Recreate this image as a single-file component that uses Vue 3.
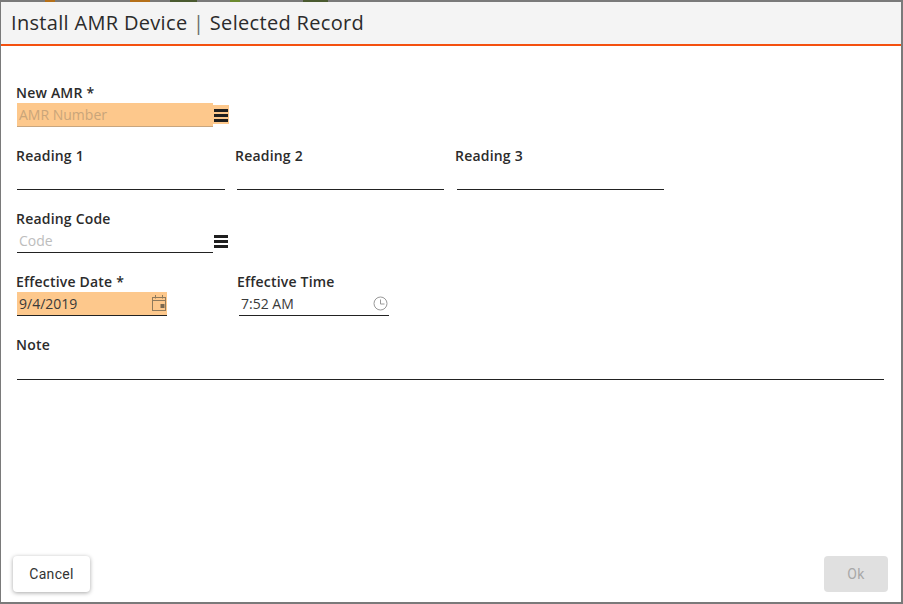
<script setup>
const readings = ['Reading 1', 'Reading 2', 'Reading 3']
</script>

<template>
  <div class="page">
    <div class="dialog">
      <header class="head">Install AMR Device <span class="sep">|</span> Selected Record</header>
      <main class="body">
        <div class="field amr">
          <label class="lbl">New AMR *</label>
          <div class="line">
            <div class="input req w196"><span class="ph ph-req">AMR Number</span></div>
            <span class="menu req-menu"><i></i><i></i><i></i></span>
          </div>
        </div>

        <div class="row readings">
          <div v-for="(r, i) in readings" :key="r" class="field reading" :class="'r' + i">
            <label class="lbl">{{ r }}</label>
            <div class="input tall"></div>
          </div>
        </div>

        <div class="field code">
          <label class="lbl">Reading Code</label>
          <div class="line">
            <div class="input w196"><span class="ph">Code</span></div>
            <span class="menu"><i></i><i></i><i></i></span>
          </div>
        </div>

        <div class="row dates">
          <div class="field date">
            <label class="lbl">Effective Date *</label>
            <div class="input req w150">
              <span class="val">9/4/2019</span>
              <svg class="ico cal" width="14" height="16" viewBox="0 0 14 16" fill="none" stroke="#8f7a5c" stroke-width="1">
                <rect x="0.5" y="2.5" width="13" height="13" />
                <path d="M0.5 5.5h13M3.5 0v3.5M10.5 0v3.5" />
                <rect x="8.5" y="9" width="4" height="4" fill="#7a6850" stroke="none" />
              </svg>
            </div>
          </div>
          <div class="field time">
            <label class="lbl">Effective Time</label>
            <div class="input w150">
              <span class="val">7:52 AM</span>
              <svg class="ico clk" width="15" height="15" viewBox="0 0 15 15" fill="none" stroke="#999" stroke-width="1">
                <circle cx="7.5" cy="7.5" r="6.5" />
                <path d="M7.5 3.5V8H11.5" />
              </svg>
            </div>
          </div>
        </div>

        <div class="field note">
          <label class="lbl">Note</label>
          <div class="input tall full"></div>
        </div>
      </main>
      <footer class="foot">
        <button class="btn cancel">Cancel</button>
        <button class="btn ok" disabled>Ok</button>
      </footer>
    </div>
  </div>
</template>

<style>
html, body { margin: 0; background: #777; }
</style>

<style scoped>
.page {
  width: 903px;
  height: 604px;
  box-sizing: border-box;
  padding: 2px 2px 2px 1px;
  background-color: #7a7a7a;
  background-image: linear-gradient(90deg,
    transparent 45px, #b5701a 45px, #b5701a 55px, transparent 55px,
    transparent 130px, #b5701a 130px, #b5701a 150px, transparent 150px,
    transparent 170px, #4a5a30 170px, #4a5a30 197px, transparent 197px,
    transparent 230px, #6c8a30 230px, #6c8a30 240px, transparent 240px,
    transparent 303px, #4a5a30 303px, #4a5a30 328px, transparent 328px);
  background-size: 100% 2px;
  background-repeat: no-repeat;
  font-family: "Open Sans", sans-serif;
  color: #262626;
  overflow: hidden;
}
.dialog {
  height: 100%;
  background: #fff;
  display: flex;
  flex-direction: column;
}
.head {
  height: 42px;
  line-height: 42px;
  padding-left: 10px;
  background: #f4f4f4;
  border-bottom: 2px solid #f4500f;
  font-size: 20px;
  letter-spacing: 0.32px;
  color: #2b2b2b;
}
.sep { color: #6b6b6b; }
.body {
  flex: 1;
  padding: 37px 0 0 15px;
  display: flex;
  flex-direction: column;
}
.field { display: flex; flex-direction: column; }
.lbl {
  font-size: 14px;
  font-weight: 600;
  line-height: 20px;
  letter-spacing: 0.2px;
  color: #2b2b2b;
}
.line { display: flex; align-items: flex-start; margin-left: 1px; }
.input {
  height: 24px;
  margin-left: 1px;
  box-sizing: border-box;
  border-bottom: 1px solid #222;
  display: flex;
  align-items: center;
  font-size: 14px;
  padding-left: 2px;
}
.line .input { margin-left: 0; }
.w196 { width: 196px; }
.w150 { width: 150px; justify-content: space-between; }
.req { background: #fdc88c; }
.amr .input { border-bottom-color: #c9a67e; }
.ph { color: #bdbdbd; }
.ph-req { color: #c9a57a; }
.val { color: #3a3a3a; }
.ico { flex: none; margin-right: 1px; }
.cal { margin-bottom: 2px; }
.clk { margin-bottom: 1px; }
.menu {
  width: 16px;
  height: 19px;
  box-sizing: border-box;
  padding-top: 2px;
  margin-top: 2px;
  display: flex;
  flex-direction: column;
  align-items: center;
  justify-content: center;
  gap: 2px;
}
.req-menu { background: #fdc88c; }
.menu i { display: block; width: 14px; height: 3px; background: #1f1f1f; }
.row { display: flex; }
.readings { margin-top: 19px; }
.reading { width: 219px; }
.r0 .input { width: 208px; }
.r1 .input { width: 207px; margin-left: 2px; }
.r2 { margin-left: 1px; }
.r2 .input { width: 207px; margin-left: 2px; }
.code { margin-top: 19px; }
.dates { margin-top: 19px; }
.date { width: 221px; }
.time .input { margin-left: 2px; }
.note { margin-top: 19px; }
.note .input { width: 867px; height: 25px; }
.foot {
  display: flex;
  justify-content: space-between;
  padding: 0 13px 10px 12px;
}
.btn {
  height: 36px;
  border: none;
  border-radius: 4px;
  font: 14px "Roboto", sans-serif;
  letter-spacing: 0.3px;
}
.cancel {
  width: 77px;
  background: #fff;
  color: #333;
  box-shadow: 0 1px 4px rgba(0, 0, 0, 0.35);
}
.ok {
  width: 64px;
  background: #e0e0e0;
  color: #a8a8a8;
}
</style>
